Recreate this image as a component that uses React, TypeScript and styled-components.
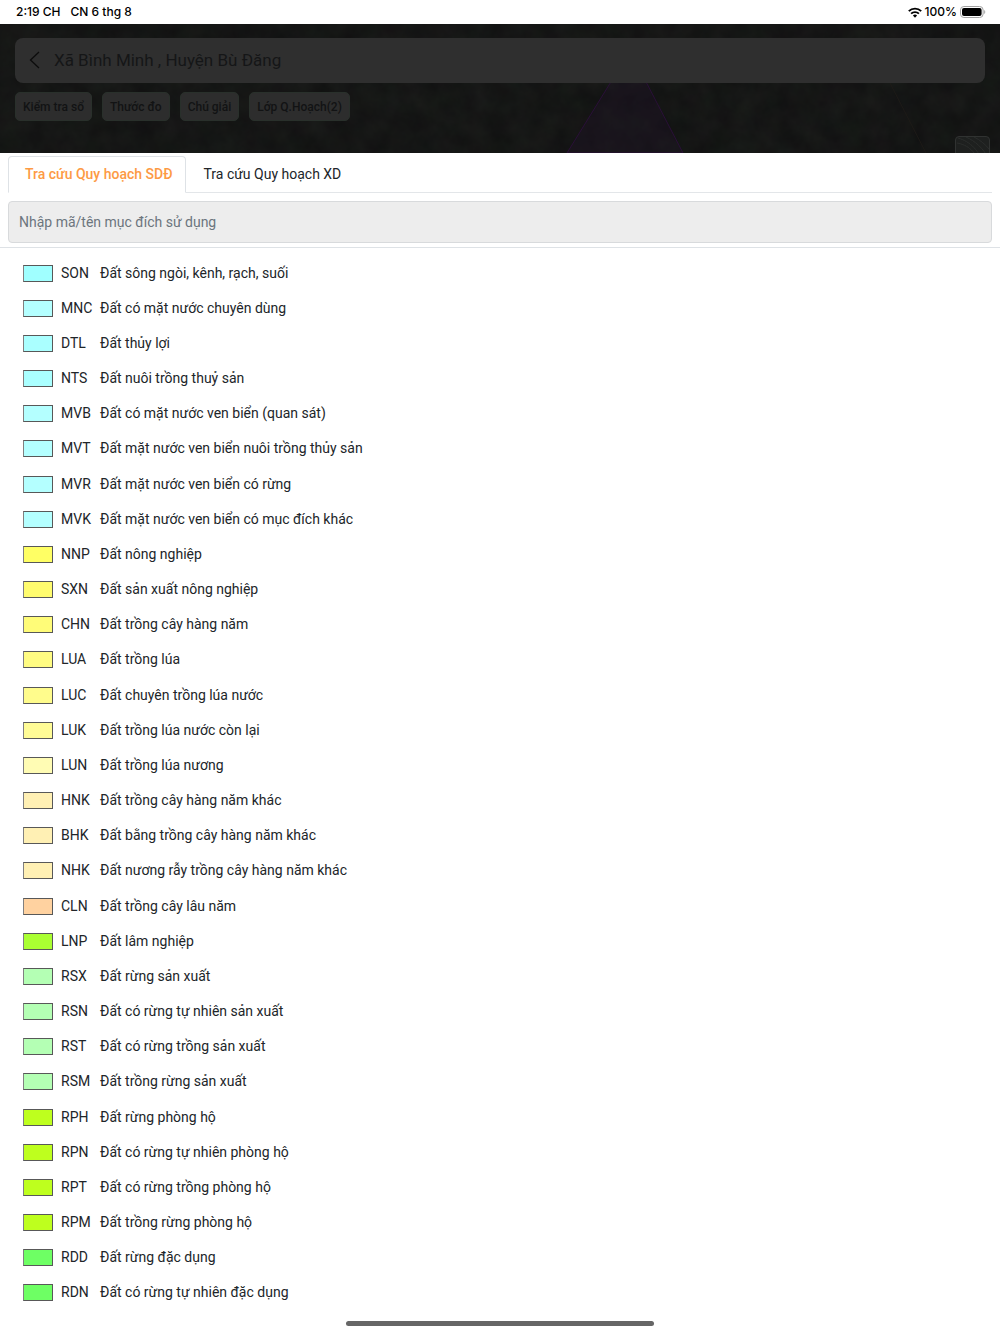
import React, { useState } from "react";
import styled, { createGlobalStyle } from "styled-components";

const GlobalStyle = createGlobalStyle`
  *, *::before, *::after { box-sizing: border-box; }
  body { margin: 0; background: #fff; color: #212529; font-family: Roboto, "Noto Sans", sans-serif; font-size: 14px; }
  button, input { font: inherit; color: inherit; }
`;

const Page = styled.div`
  display: flex;
  flex-direction: column;
  min-height: 100vh;
`;

const StatusBar = styled.div`
  display: flex;
  align-items: center;
  justify-content: space-between;
  height: 24px;
  padding: 0 14px 0 16px;
  color: #000;
  font: 500 12px/16px Inter, "Noto Sans", sans-serif;
`;

const StatusGroup = styled.div<{ $gap: number }>`
  display: flex;
  align-items: center;
  gap: ${(p) => p.$gap}px;
`;

const MapHeader = styled.header`
  position: relative;
  overflow: hidden;
  height: 129px;
  padding: 14px 15px;
  background: #141615;
`;

const MapPicture = styled.svg`
  position: absolute;
  inset: 0;
  width: 100%;
  height: 100%;
`;

const PlaceBar = styled.div`
  position: relative;
  display: flex;
  align-items: center;
  gap: 13px;
  height: 45px;
  padding: 0 13px 2px;
  border-radius: 8px;
  background: #2f2f2f;
  color: #151617;
  font-size: 17px;
  line-height: 24px;
`;

const BackButton = styled.button`
  display: flex;
  padding: 0;
  border: 0;
  background: none;
  color: #0c0c0c;
`;

const Chips = styled.div`
  position: relative;
  display: flex;
  gap: 10px;
  margin-top: 9px;
`;

const Chip = styled.button`
  height: 29px;
  padding: 0 7px;
  border: 1px solid #29302b;
  border-radius: 5px;
  background: #2d2d2d;
  color: #121314;
  font-size: 12px;
  font-weight: 500;
  line-height: 16px;
`;

const LayerButton = styled.button`
  position: absolute;
  right: 10px;
  top: 112px;
  width: 35px;
  height: 35px;
  padding: 0;
  overflow: hidden;
  border: 1px solid #303231;
  border-radius: 4px;
  background: #1e201f;
`;

const Sheet = styled.main`
  display: flex;
  flex: 1;
  flex-direction: column;
`;

const SheetTop = styled.div`
  padding: 3px 8px 4px;
  border-bottom: 1px solid #dee2e6;
`;

const Tabs = styled.div`
  display: flex;
  margin-bottom: 8px;
  border-bottom: 1px solid #e3e6e9;
`;

const Tab = styled.button<{ $active: boolean }>`
  height: 37px;
  margin-bottom: -1px;
  padding: 0 13px 2px 16px;
  border: 1px solid ${(p) => (p.$active ? "#dee2e6" : "transparent")};
  border-bottom-color: ${(p) => (p.$active ? "#fff" : "transparent")};
  border-radius: 4px 4px 0 0;
  background: ${(p) => (p.$active ? "#fff" : "transparent")};
  color: ${(p) => (p.$active ? "#fd9a44" : "#212529")};
  font-weight: ${(p) => (p.$active ? 500 : 400)};
  line-height: 20px;
`;

const SearchBox = styled.input`
  display: block;
  width: 100%;
  height: 42px;
  padding: 0 10px;
  border: 1px solid #d8dadc;
  border-radius: 4px;
  background: #ededed;
  &::placeholder { color: #6c757d; opacity: 1; }
`;

const Legend = styled.ul`
  display: grid;
  flex: 1;
  grid-auto-rows: minmax(35px, 1fr);
  margin: 0;
  padding: 7px 23px 0;
  list-style: none;
`;

const LegendRow = styled.li`
  display: grid;
  grid-template-columns: 30px 31px 1fr;
  align-items: center;
  column-gap: 8px;
  line-height: 20px;
`;

const Swatch = styled.span<{ $color: string }>`
  height: 17px;
  margin-top: 1px;
  border: 1px solid #585858;
  border-left-color: #808080;
  background: ${(p) => p.$color};
`;

const HomeArea = styled.footer`
  display: flex;
  justify-content: center;
  height: 24px;
  padding-top: 11px;
`;

const HomeBar = styled.div`
  width: 308px;
  height: 5px;
  border-radius: 3px;
  background: #666;
`;

const lands: [string, string, string][] = [
  ["SON", "Đất sông ngòi, kênh, rạch, suối", "#a0ffff"],
  ["MNC", "Đất có mặt nước chuyên dùng", "#b4ffff"],
  ["DTL", "Đất thủy lợi", "#aaffff"],
  ["NTS", "Đất nuôi trồng thuỷ sản", "#aaffff"],
  ["MVB", "Đất có mặt nước ven biển (quan sát)", "#b4ffff"],
  ["MVT", "Đất mặt nước ven biển nuôi trồng thủy sản", "#b4ffff"],
  ["MVR", "Đất mặt nước ven biển có rừng", "#b4ffff"],
  ["MVK", "Đất mặt nước ven biển có mục đích khác", "#b4ffff"],
  ["NNP", "Đất nông nghiệp", "#ffff64"],
  ["SXN", "Đất sản xuất nông nghiệp", "#fffc6e"],
  ["CHN", "Đất trồng cây hàng năm", "#fffc78"],
  ["LUA", "Đất trồng lúa", "#fffc82"],
  ["LUC", "Đất chuyên trồng lúa nước", "#fffc8c"],
  ["LUK", "Đất trồng lúa nước còn lại", "#fffc96"],
  ["LUN", "Đất trồng lúa nương", "#fffcb4"],
  ["HNK", "Đất trồng cây hàng năm khác", "#fff0b4"],
  ["BHK", "Đất bằng trồng cây hàng năm khác", "#fff0b4"],
  ["NHK", "Đất nương rẫy trồng cây hàng năm khác", "#fff0b4"],
  ["CLN", "Đất trồng cây lâu năm", "#ffd2a0"],
  ["LNP", "Đất lâm nghiệp", "#aaff32"],
  ["RSX", "Đất rừng sản xuất", "#b4ffb4"],
  ["RSN", "Đất có rừng tự nhiên sản xuất", "#b4ffb4"],
  ["RST", "Đất có rừng trồng sản xuất", "#b4ffb4"],
  ["RSM", "Đất trồng rừng sản xuất", "#b4ffb4"],
  ["RPH", "Đất rừng phòng hộ", "#beff1e"],
  ["RPN", "Đất có rừng tự nhiên phòng hộ", "#beff1e"],
  ["RPT", "Đất có rừng trồng phòng hộ", "#beff1e"],
  ["RPM", "Đất trồng rừng phòng hộ", "#beff1e"],
  ["RDD", "Đất rừng đặc dụng", "#6eff64"],
  ["RDN", "Đất có rừng tự nhiên đặc dụng", "#6eff64"],
];

const chips = ["Kiểm tra sổ", "Thước đo", "Chú giải", "Lớp Q.Hoạch(2)"];
const tabs = ["Tra cứu Quy hoạch SDĐ", "Tra cứu Quy hoạch XD"];

const WifiIcon = () => (
  <svg width="14" height="11" viewBox="0 0 14 11" fill="none" stroke="#000" strokeWidth="1.9" aria-hidden="true">
    <path d="M.8 4.2a8.8 8.8 0 0 1 12.4 0" />
    <path d="M3.1 6.7a5.5 5.5 0 0 1 7.8 0" />
    <path d="M7 10.7 4.9 8.5a3 3 0 0 1 4.2 0Z" fill="#000" stroke="none" />
  </svg>
);

const BatteryIcon = () => (
  <svg width="26" height="12" viewBox="0 0 26 12" aria-hidden="true">
    <rect x=".5" y=".5" width="22.6" height="11" rx="3.4" fill="none" stroke="#a2a2a2" />
    <rect x="2" y="2" width="19.6" height="8" rx="2" fill="#000" />
    <path d="M24.2 4v4c1.4-.5 1.4-3.500 0-4Z" fill="#a2a2a2" />
  </svg>
);

const SatelliteMap = () => (
  <MapPicture viewBox="0 0 1000 129" preserveAspectRatio="xMidYMin slice" aria-hidden="true">
    <filter id="terrain" x="0" y="0" width="100%" height="100%" colorInterpolationFilters="sRGB">
      <feTurbulence type="fractalNoise" baseFrequency=".045" numOctaves="4" seed="8" />
      <feColorMatrix values=".03 .03 0 0 .052  .01 .05 0 0 .056  .02 .03 .01 0 .052  0 0 0 0 1" />
    </filter>
    <rect width="1000" height="129" filter="url(#terrain)" />
    <path d="M567 129 630 27 683 129Z" fill="#24112f" fillOpacity=".28" stroke="#2a1038" />
    <path d="m890 59 36 70" stroke="#211c18" strokeWidth=".7" />
  </MapPicture>
);

export default function App() {
  const [tab, setTab] = useState(0);
  const [query, setQuery] = useState("");
  const needle = query.trim().toLowerCase();
  const rows = lands.filter(([code, name]) => `${code} ${name}`.toLowerCase().includes(needle));

  return (
    <Page>
      <GlobalStyle />
      <StatusBar>
        <StatusGroup $gap={10}>
          <span>2:19 CH</span>
          <span>CN 6 thg 8</span>
        </StatusGroup>
        <StatusGroup $gap={3}>
          <WifiIcon />
          <span>100%</span>
          <BatteryIcon />
        </StatusGroup>
      </StatusBar>
      <MapHeader>
        <SatelliteMap />
        <PlaceBar>
          <BackButton aria-label="Quay lại">
            <svg width="13" height="18" viewBox="0 0 13 18" fill="none" stroke="currentColor" strokeWidth="1.3">
              <path d="M11 1 2.500 9 11 17" />
            </svg>
          </BackButton>
          <span>Xã Bình Minh , Huyện Bù Đăng</span>
        </PlaceBar>
        <Chips>
          {chips.map((c) => (
            <Chip key={c}>{c}</Chip>
          ))}
        </Chips>
        <LayerButton aria-label="Lớp bản đồ">
          <svg width="33" height="33" viewBox="0 0 33 33" fill="none" stroke="#2b2d2c">
            <path d="M1 6C12 8 20 14 26 32M2 1c13 4 21 12 28 31M10 0c9 4 17 11 23 22M18 0c6 3 11 7 15 12" />
          </svg>
        </LayerButton>
      </MapHeader>
      <Sheet>
        <SheetTop>
          <Tabs role="tablist">
            {tabs.map((t, i) => (
              <Tab key={t} role="tab" aria-selected={tab === i} $active={tab === i} onClick={() => setTab(i)}>
                {t}
              </Tab>
            ))}
          </Tabs>
          <SearchBox
            aria-label="Nhập mã/tên mục đích sử dụng"
            placeholder="Nhập mã/tên mục đích sử dụng"
            value={query}
            onChange={(e) => setQuery(e.target.value)}
          />
        </SheetTop>
        <Legend>
          {rows.map(([code, name, color]) => (
            <LegendRow key={code}>
              <Swatch $color={color} />
              <span>{code}</span>
              <span>{name}</span>
            </LegendRow>
          ))}
        </Legend>
      </Sheet>
      <HomeArea>
        <HomeBar />
      </HomeArea>
    </Page>
  );
}
